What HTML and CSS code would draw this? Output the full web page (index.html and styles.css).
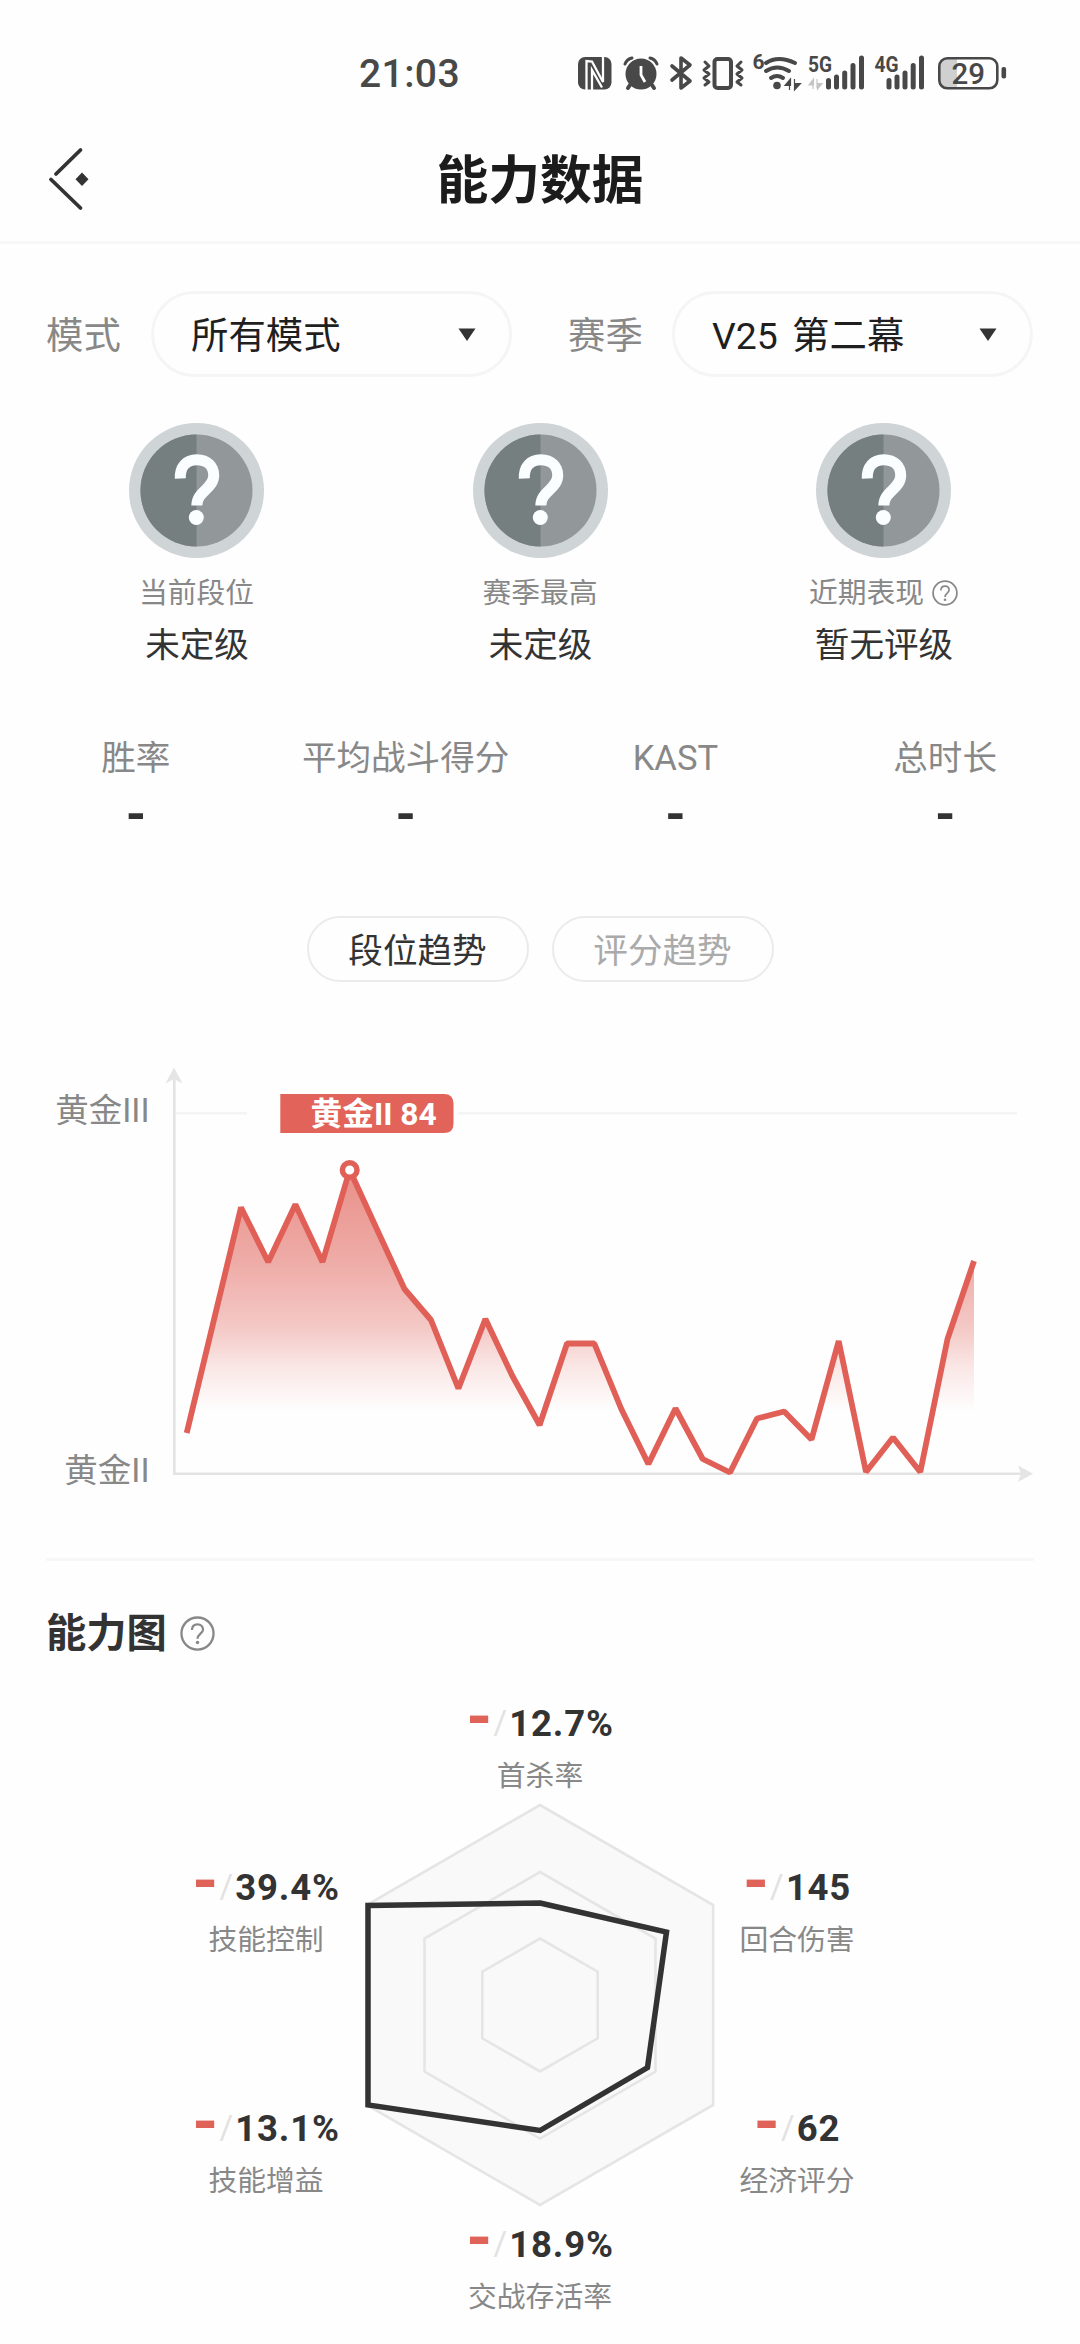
FILE: index.html
```html
<!DOCTYPE html>
<html lang="zh-CN">
<head>
<meta charset="utf-8">
<title>能力数据</title>
<link rel="stylesheet" href="styles.css">
</head>
<body>
<div class="status">
  <span class="clock">21:03</span>
  <div class="status-icons">
    <svg width="40" height="44" viewBox="574 51 40 44"><rect x="578" y="57" width="33.500" height="32.500" rx="7" fill="#484848"/><path d="M586.500 90V61L592 61.500L603 82V56.500M592 91V70L602 87.500" fill="none" stroke="#fefefe" stroke-width="2.300"/></svg>
    <svg width="52" height="44" viewBox="614 51 52 44"><g stroke="#484848" fill="none" stroke-width="4" stroke-linecap="round"><path d="M630 85l-2 3M652 85l2 3"/><path d="M625 64q2-5 7-6M657 64q-2-5-7-6" stroke-width="3"/></g><circle cx="641" cy="74" r="15.500" fill="#484848"/><path d="M641 66v9l4 7" fill="none" stroke="#fefefe" stroke-width="2.800"/></svg>
    <svg width="32" height="44" viewBox="666 51 32 44"><path d="M672 66l18 15-9 7V58l9 7-18 15" fill="none" stroke="#484848" stroke-width="3.600" stroke-linejoin="round" stroke-linecap="round"/></svg>
    <svg width="50" height="44" viewBox="698 51 50 44"><g fill="none" stroke="#484848" stroke-linejoin="round" stroke-linecap="round"><rect x="714.500" y="59" width="16.500" height="29" rx="3" stroke-width="4"/><path d="M705 62l4 4-5 4 5 4-5 4 5 4-4 3M741 62l-4 4 5 4-5 4 5 4-5 4 4 3" stroke-width="3"/></g></svg>
    <svg width="58" height="44" viewBox="748 51 58 44"><text x="752.500" y="68.500" class="net" font-size="21">6</text><g fill="none" stroke="#484848" stroke-width="4" stroke-linecap="round"><path d="M766 63q12-8 29 0"/><path d="M766 71q11-7 23 0" /><path d="M771 78q6-4 12 0"/></g><circle cx="777" cy="85.500" r="3.800" fill="#484848"/><path d="M785 85.500h5.500V79zM789.500 80v10M794.500 79v10M800.500 83.500h-6V90z" fill="#484848" stroke="#484848" stroke-width="1.200"/></svg>
    <svg width="64" height="44" viewBox="806 51 64 44"><text x="808" y="71.500" class="net" font-size="22" textLength="24" lengthAdjust="spacingAndGlyphs">5G</text><path d="M809 85h4.500V79zM813 80v9M817 79v9M822 83.500h-4.500V89z" fill="#c5c5c5" stroke="#c5c5c5" stroke-width="1.200"/><path d="M828.500 80.500V87M836.500 77V87M844.700 73V87M853 65.500V87M861.500 58V87" stroke="#484848" stroke-width="5" stroke-linecap="round"/></svg>
    <svg width="64" height="44" viewBox="870 51 64 44"><text x="874.500" y="71.500" class="net" font-size="22" textLength="24" lengthAdjust="spacingAndGlyphs">4G</text><path d="M889 80.500V87M897 77V87M905 73V87M913.200 65.500V87M921.500 58V87" stroke="#484848" stroke-width="5" stroke-linecap="round"/></svg>
    <svg width="76" height="44" viewBox="934 51 76 44"><path d="M957 58.500h-8q-9.500 0-9.500 9.500v11q0 9.500 9.500 9.500h8z" fill="#d0d0d0"/><rect x="939.300" y="58.300" width="58" height="30" rx="8" fill="none" stroke="#484848" stroke-width="2.600"/><rect x="1001.500" y="67" width="4.600" height="11.500" rx="2" fill="#484848"/><text x="951.500" y="83.500" class="bat" font-size="29.500">29</text></svg>
  </div>
</div>

<header class="header">
  <svg class="back" width="42" height="64" viewBox="48 147 42 64"><path d="M80.500 150L56 174M51 179.500L80.500 208" stroke="#333" stroke-width="3.800" stroke-linecap="round" fill="none"/><path d="M82 172.500l6.500 6.700-6.500 6.700-6.500-6.700z" fill="#333"/></svg>
  <h1>能力数据</h1>
</header>

<section class="filters">
  <span class="flabel">模式</span>
  <div class="select"><span>所有模式</span><svg width="18" height="13" viewBox="0 0 18 13"><path d="M.5 .5h17L9 13z" fill="#333"/></svg></div>
  <span class="flabel second">赛季</span>
  <div class="select"><span>V25 第二幕</span><svg width="18" height="13" viewBox="0 0 18 13"><path d="M.5 .5h17L9 13z" fill="#333"/></svg></div>
</section>

<svg class="defs" width="0" height="0">
  <symbol id="rank" viewBox="0 0 135 135"><circle cx="67.500" cy="67.500" r="67.500" fill="#cfd4d7"/><circle cx="67.500" cy="67.500" r="56" fill="#929799"/><path d="M67.500 11.500a56 56 0 0 0 0 112z" fill="#767f80"/><path d="M51.300 55.500C50.800 43.500 57.500 36.800 67.800 36.800C78.500 36.800 84.700 43.500 84.700 52.500C84.700 66 67.800 68 67.800 82.500" fill="none" stroke="#fbfeff" stroke-width="11"/><circle cx="67.300" cy="94.500" r="7.500" fill="#fbfeff"/></symbol>
  <symbol id="help" viewBox="0 0 36 36"><circle cx="18" cy="18" r="16.500" fill="none" stroke="#888" stroke-width="2.400"/><path d="M12.300 14.500C12.300 10.500 14.600 8.500 18 8.500S23.700 10.700 23.700 14C23.700 18 18 18.500 18 23.500" fill="none" stroke="#888" stroke-width="2.300"/><circle cx="18" cy="27.300" r="1.800" fill="#888"/></symbol>
</svg>

<section class="ranks">
  <div class="rank"><svg class="badge"><use href="#rank"/></svg><div class="rlabel">当前段位</div><div class="rvalue">未定级</div></div>
  <div class="rank"><svg class="badge"><use href="#rank"/></svg><div class="rlabel">赛季最高</div><div class="rvalue">未定级</div></div>
  <div class="rank"><svg class="badge"><use href="#rank"/></svg><div class="rlabel">近期表现<svg class="help-s"><use href="#help"/></svg></div><div class="rvalue">暂无评级</div></div>
</section>

<section class="stats">
  <div><div class="slabel">胜率</div><div class="svalue">-</div></div>
  <div><div class="slabel">平均战斗得分</div><div class="svalue">-</div></div>
  <div><div class="slabel">KAST</div><div class="svalue">-</div></div>
  <div><div class="slabel">总时长</div><div class="svalue">-</div></div>
</section>

<nav class="tabs">
  <div class="tab active">段位趋势</div>
  <div class="tab">评分趋势</div>
</nav>

<section class="trend">
  <svg width="1080" height="440" viewBox="0 1060 1080 440">
    <defs><linearGradient id="area" gradientUnits="userSpaceOnUse" x1="0" y1="1170" x2="0" y2="1412"><stop offset="0" stop-color="#e06057" stop-opacity=".7"/><stop offset=".4" stop-color="#e06057" stop-opacity=".51"/><stop offset=".66" stop-color="#e06057" stop-opacity=".33"/><stop offset=".82" stop-color="#e06057" stop-opacity=".14"/><stop offset="1" stop-color="#e06057" stop-opacity="0"/></linearGradient></defs>
    <path d="M176 1113.300H247M458 1113.300H1017" stroke="#f4f4f4" stroke-width="2.500"/>
    <path d="M174.300 1076V1473.700H1022" fill="none" stroke="#e3e3e3" stroke-width="2.600"/>
    <path d="M174 1067.500L182.500 1083.500L174 1079L165.500 1083.500zM1033 1473.700L1018 1465.500L1021 1473.700L1018 1482z" fill="#e5e5e5"/>
    <text x="149.500" y="1122" class="axis">黄金III</text>
    <text x="149.500" y="1482" class="axis">黄金II</text>
    <path fill="url(#area)" d="M186.700 1432L213.900 1320L241 1209L268.200 1261L295.400 1205L322.500 1261L349.700 1170L376.800 1229L404.500 1289L431 1320L458.400 1388L485.400 1320L512.400 1378L539.600 1424L567 1343.500L594.300 1343.500L621.300 1409L648.400 1464L675.500 1409L702.700 1459L730 1472.500L757 1418.500L784.200 1411.500L811.500 1439L838.700 1342L866 1471.500L893 1438L920.300 1471.500L947.500 1339L974 1261V1473H187z"/>
    <path fill="none" stroke="#e06058" stroke-width="5.800" stroke-linejoin="bevel" d="M186.700 1433L213.900 1320L241 1207.500L268.200 1262L295.400 1204.500L322.500 1262L349.700 1170L376.800 1229L404.500 1289L431 1320L458.400 1388.500L485.400 1319L512.400 1376L539.600 1425L567 1343.500L594.300 1343.500L621.300 1409L648.400 1464L675.500 1408.500L702.700 1459L730 1472.500L757 1418.500L784.200 1411.500L811.500 1439.500L838.700 1341L866 1472L893 1437.500L920.300 1472L947.500 1339L974 1261"/>
    <circle cx="349.700" cy="1170" r="7.300" fill="#fff" stroke="#e06058" stroke-width="5.500"/>
    <path d="M280.300 1094H444q9.500 0 9.500 9.500v20q0 9.500-9.500 9.500H280.300z" fill="#e1635a"/>
    <text x="310.500" y="1125" class="tip">黄金II 84</text>
  </svg>
</section>

<section class="ability">
  <h2>能力图<svg class="help-l"><use href="#help"/></svg></h2>
  <div class="radar">
    <div class="side left">
      <div class="metric"><div class="mv"><i>-</i><s>/</s><b>39.4%</b></div><div class="ml">技能控制</div></div>
      <div class="metric"><div class="mv"><i>-</i><s>/</s><b>13.1%</b></div><div class="ml">技能增益</div></div>
    </div>
    <div class="middle">
      <div class="metric"><div class="mv"><i>-</i><s>/</s><b>12.7%</b></div><div class="ml">首杀率</div></div>
      <svg width="352" height="406" viewBox="364 1802 352 406">
        <g stroke="#e5e5e5" stroke-width="2.600" fill="none"><path fill="#f9f9f9" d="M540 1805L713.200 1905V2105L540 2205L366.800 2105V1905z"/><path d="M540 1872L655.500 1938.500V2071.500L540 2138.500L424.500 2071.500V1938.500z"/><path d="M540 1938.500L597.700 1971.700V2038.300L540 2071.500L482.300 2038.300V1971.700z"/></g>
        <path d="M540 1903L666.500 1932L647.500 2067.500L540 2130.500L368 2105V1905.500z" fill="none" stroke="#333" stroke-width="5.500"/>
      </svg>
      <div class="metric last"><div class="mv"><i>-</i><s>/</s><b>18.9%</b></div><div class="ml">交战存活率</div></div>
    </div>
    <div class="side">
      <div class="metric"><div class="mv"><i>-</i><s>/</s><b>145</b></div><div class="ml">回合伤害</div></div>
      <div class="metric"><div class="mv"><i>-</i><s>/</s><b>62</b></div><div class="ml">经济评分</div></div>
    </div>
  </div>
</section>
</body>
</html>
```
FILE: styles.css
```css
* { box-sizing: border-box; }
body {
  margin: 0;
  width: 1080px;
  height: 2344px;
  overflow: hidden;
  background: #fefefe;
  color: #333;
  font-family: Roboto, "Noto Sans CJK SC", sans-serif;
}
svg { display: block; flex: none; }
.defs { display: none; }

.status { display: flex; height: 122px; padding-top: 51px; }
.clock { width: 215px; margin-left: 359px; padding-top: 1px; font-size: 39px; line-height: 44px; letter-spacing: .4px; font-weight: 500; color: #484848; }
.status-icons { display: flex; }
.net { font-weight: 700; fill: #484848; font-family: Roboto, sans-serif; }
.bat { font-weight: 500; fill: #484848; font-family: Roboto, sans-serif; }

.header { display: grid; grid-template-columns: 48px 1fr 48px; height: 122px; border-bottom: 3px solid #f7f7f7; align-items: center; padding-bottom: 5px; }
.header h1 { margin: 0; padding-top: 5px; grid-column: 2; grid-row: 1; text-align: center; font-size: 51.8px; line-height: 60px; font-weight: 700; color: #1c1c1c; }
.back { grid-column: 2; grid-row: 1; }

.filters { display: flex; align-items: center; height: 86px; margin-top: 47px; padding-left: 46px; }
.flabel { width: 105px; padding-top: 3px; font-size: 37.4px; line-height: 50px; color: #888; }
.flabel.second { margin-left: 56px; width: 104px; }
.select { width: 361px; height: 86px; border: 3px solid #f5f5f5; border-radius: 43px; padding: 0 33px 0 37px; display: flex; align-items: center; justify-content: space-between; font-size: 37.4px; line-height: 50px; color: #1f1f1f; }
.select span { padding-top: 3px; word-spacing: 5px; }

.ranks { display: flex; padding: 0 24.75px; margin-top: 46px; height: 240px; }
.rank { flex: 1; display: flex; flex-direction: column; align-items: center; }
.badge { width: 135px; height: 135px; }
.rlabel { display: flex; align-items: center; margin-top: 15px; font-size: 28.8px; line-height: 40px; color: #888; }
.help-s { width: 26px; height: 26px; margin-left: 8px; }
.rvalue { margin-top: 8px; padding-left: 1px; font-size: 34.6px; line-height: 48px; }

.stats { display: grid; grid-template-columns: repeat(4, 1fr); margin-top: 71px; height: 109px; padding-left: 1px; text-align: center; }
.slabel { font-size: 34.6px; line-height: 48px; color: #888; }
.svalue { font-size: 52px; line-height: 56px; font-weight: 700; margin-top: 5px; }

.tabs { display: flex; justify-content: center; gap: 23px; margin-top: 73px; }
.tab { width: 222px; height: 66px; padding-top: 2px; border: 2px solid #ebebeb; border-radius: 33px; text-align: center; font-size: 34.6px; line-height: 62px; color: #aaa; }
.tab.active { color: #333; }

.trend { margin-top: 78px; height: 440px; }
.axis { font-size: 33.5px; fill: #888; text-anchor: end; }
.tip { font-size: 31.7px; font-weight: 700; fill: #fff; }

.ability { margin: 58px 46px 0; border-top: 3px solid #f7f7f7; }
.ability h2 { display: flex; align-items: center; margin: 45px 0 0; font-size: 40.3px; line-height: 56px; font-weight: 700; }
.help-l { width: 35px; height: 35px; margin-left: 13px; margin-bottom: 2px; }
.radar { display: grid; grid-template-columns: 199px 346px 169px; margin: 36px 0 0 122px; }
.side { display: flex; flex-direction: column; gap: 145px; padding-top: 164px; padding-right: 1px; }
.side.left { padding-right: 3px; }
.middle { display: flex; flex-direction: column; align-items: center; gap: 8px; }
.metric { height: 96px; display: flex; flex-direction: column; align-items: center; white-space: nowrap; }
.metric.last { margin-top: 3px; }
.mv { display: flex; height: 52px; line-height: 52px; }
.mv i { font-style: normal; font-weight: 700; font-size: 66px; line-height: 40px; color: #e0635a; width: 25px; }
.mv s { text-decoration: none; font-weight: 400; font-size: 33px; line-height: 49px; color: #e2e2e2; width: 18px; text-align: center; }
.mv b { font-size: 36.5px; letter-spacing: .8px; }
.ml { font-size: 28.8px; line-height: 44px; color: #888; margin-top: 4px; }
```
